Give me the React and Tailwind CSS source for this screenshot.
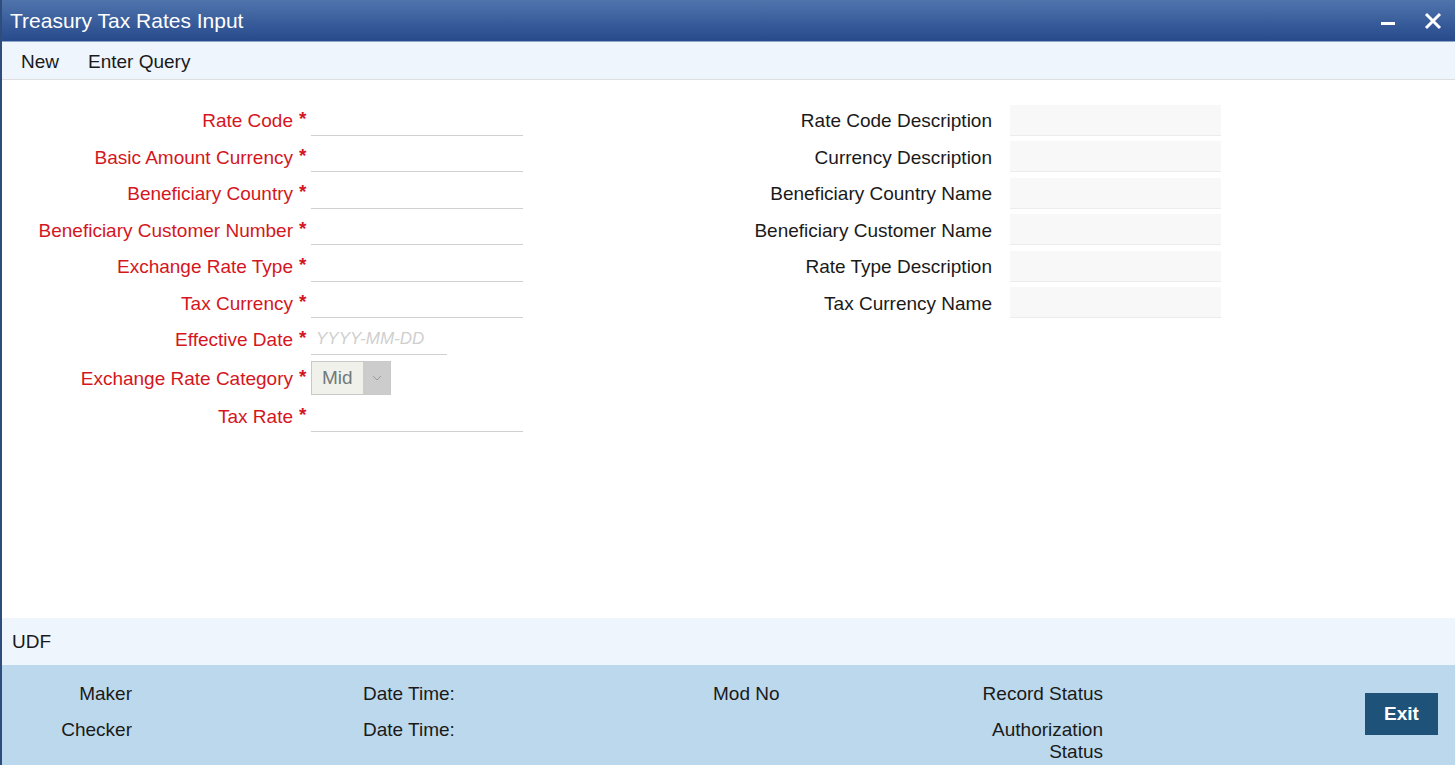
import React from "react";

const leftFields = [
  { label: "Rate Code", type: "text" },
  { label: "Basic Amount Currency", type: "text" },
  { label: "Beneficiary Country", type: "text" },
  { label: "Beneficiary Customer Number", type: "text" },
  { label: "Exchange Rate Type", type: "text" },
  { label: "Tax Currency", type: "text" },
  { label: "Effective Date", type: "date" },
  { label: "Exchange Rate Category", type: "select" },
  { label: "Tax Rate", type: "text" },
];

const rightFields = [
  "Rate Code Description",
  "Currency Description",
  "Beneficiary Country Name",
  "Beneficiary Customer Name",
  "Rate Type Description",
  "Tax Currency Name",
];

function LeftRow({ f }) {
  const tall = f.type === "select";
  return (
    <div className={`flex items-center ${tall ? "h-[40.5px]" : "h-[36.5px]"}`}>
      <div className="w-[291px] shrink-0 text-right text-[#d4161e] whitespace-nowrap pt-[2px]">{f.label}</div>
      <div className="w-[18px] shrink-0 pl-[6px] text-[#d4161e] font-bold leading-none -mt-[3px]">*</div>
      {f.type === "text" && (
        <div className="w-[212px] shrink-0 h-[31px] border-b border-[#d0d0d0]" />
      )}
      {f.type === "date" && (
        <div className="w-[136px] shrink-0 h-[31px] border-b border-[#d0d0d0] flex items-center pl-[5px] text-[17px] italic text-[#cfcfcf]">
          YYYY-MM-DD
        </div>
      )}
      {f.type === "select" && (
        <div className="flex shrink-0 h-[34px] border border-[#c9c9c9]">
          <div className="w-[51px] bg-[#f1f1ec] text-[#6f7a7a] flex items-center pl-[10px]">Mid</div>
          <div className="w-[27px] bg-[#cccccc] flex items-center justify-center">
            <svg width="10" height="6" viewBox="0 0 10 6" fill="none">
              <path d="M1 1l4 4 4-4" stroke="#9a9a9a" strokeWidth="1" />
            </svg>
          </div>
        </div>
      )}
    </div>
  );
}

function RightRow({ label }) {
  return (
    <div className="flex items-center h-[36.5px]">
      <div className="w-[292px] shrink-0 text-right text-[#1a1a1a] whitespace-nowrap pt-[2px]">{label}</div>
      <div className="ml-[18px] shrink-0 w-[211px] h-[31px] bg-[#f8f8f8] border-b border-[#ececec]" />
    </div>
  );
}

export default function App() {
  return (
    <div
      className="w-[1455px] h-[765px] flex flex-col overflow-hidden border-l-2 border-[#2d4d7d] bg-white text-[19px] text-[#1a1a1a]"
      style={{ fontFamily: '"Liberation Sans", Arial, sans-serif' }}
    >
      {/* Title bar */}
      <div className="h-[42px] shrink-0 flex items-center bg-gradient-to-b from-[#4f74ac] to-[#274a8c] border-b border-[#8ea5c7]">
        <div className="pl-[8px] text-white text-[21px]">Treasury Tax Rates Input</div>
        <div className="ml-auto flex items-center">
          <svg width="16" height="16" viewBox="0 0 16 16" className="mr-[28px]">
            <rect x="1" y="9" width="14" height="3" fill="white" />
          </svg>
          <svg width="18" height="18" viewBox="0 0 18 18" className="mr-[13px]">
            <path d="M2 2L16 16M16 2L2 16" stroke="white" strokeWidth="3" />
          </svg>
        </div>
      </div>

      {/* Toolbar */}
      <div className="h-[38px] shrink-0 flex items-center pt-[3px] bg-[#eef5fd] border-b border-[#dedede]">
        <span className="ml-[19px]">New</span>
        <span className="ml-[29px]">Enter Query</span>
      </div>

      {/* Form */}
      <div className="flex-1 flex pt-[22px]">
        <div className="w-[540px] shrink-0 flex flex-col">
          {leftFields.map((f) => (
            <LeftRow key={f.label} f={f} />
          ))}
        </div>
        <div className="ml-[158px] flex flex-col">
          {rightFields.map((l) => (
            <RightRow key={l} label={l} />
          ))}
        </div>
      </div>

      {/* UDF */}
      <div className="h-[47px] shrink-0 flex items-center pt-[2px] bg-[#eef5fd] pl-[10px]">UDF</div>

      {/* Footer */}
      <div className="h-[100px] shrink-0 bg-[#bcd8ec] flex leading-[22px] text-[#1a1a1a]">
        <div className="w-[130px] shrink-0 pt-[18px] flex flex-col gap-[14px] text-right">
          <div>Maker</div>
          <div>Checker</div>
        </div>
        <div className="ml-[231px] w-[300px] shrink-0 pt-[18px] flex flex-col gap-[14px]">
          <div>Date Time:</div>
          <div>Date Time:</div>
        </div>
        <div className="ml-[50px] w-[150px] shrink-0 pt-[18px]">
          <div>Mod No</div>
        </div>
        <div className="ml-[115px] w-[125px] shrink-0 pt-[18px] flex flex-col gap-[14px] text-right">
          <div>Record Status</div>
          <div>Authorization Status</div>
        </div>
        <div className="ml-auto mr-[17px] mt-[28px]">
          <div className="w-[73px] h-[42px] bg-[#1f5278] text-white font-bold flex items-center justify-center">
            Exit
          </div>
        </div>
      </div>
    </div>
  );
}
